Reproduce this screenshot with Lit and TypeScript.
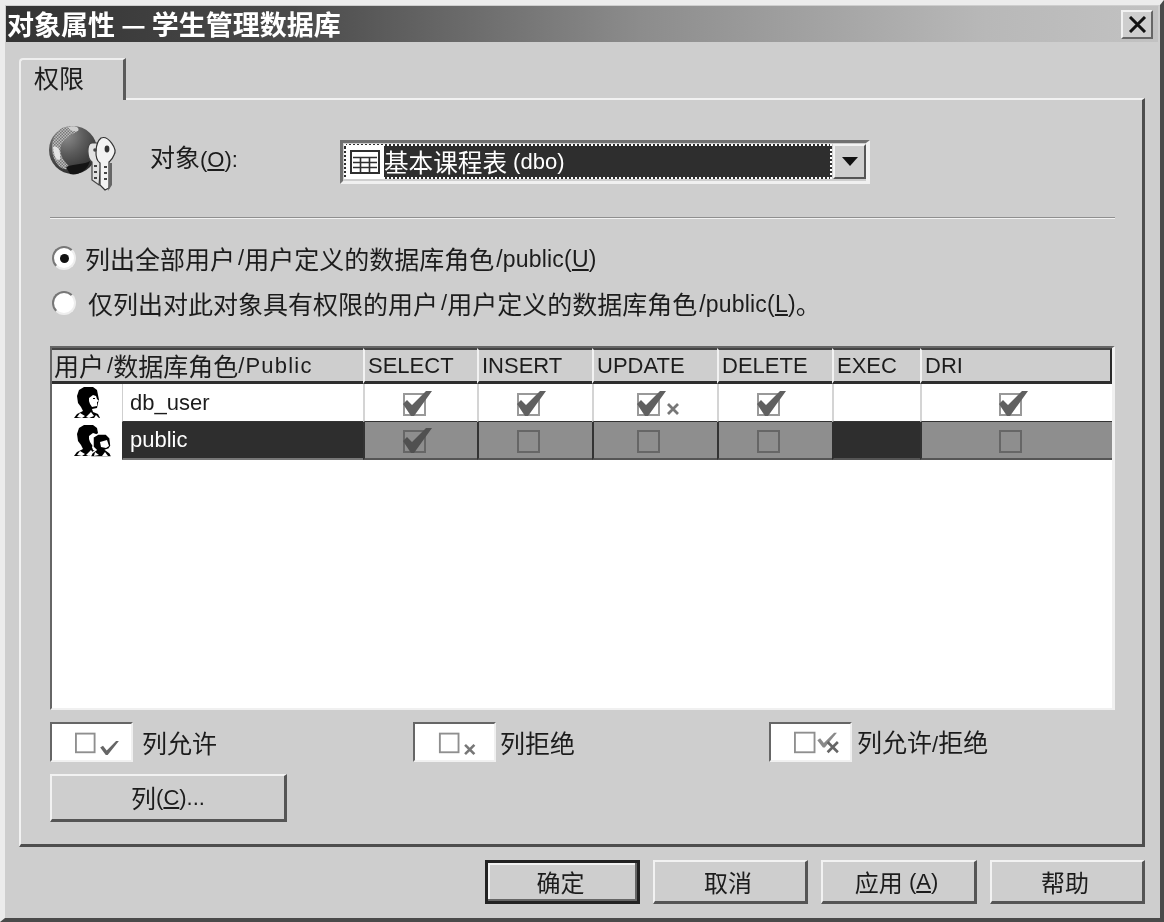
import { LitElement, html, css, svg } from "lit";
import { customElement } from "lit/decorators.js";

type Cell = "allow" | "allowx" | "empty" | "none";
const cols = ["SELECT", "INSERT", "UPDATE", "DELETE", "EXEC", "DRI"];
const rows: { name: string; icon: string; sel: boolean; cells: Cell[] }[] = [
  { name: "db_user", icon: "user", sel: false, cells: ["allow", "allow", "allowx", "allow", "none", "allow"] },
  { name: "public", icon: "group", sel: true, cells: ["allow", "empty", "empty", "empty", "none", "empty"] },
];

const box = (x: number, y: number, s: number, c: string) =>
  svg`<rect x=${x + 1} y=${y + 1} width=${s - 2} height=${s - 2} fill="none" stroke=${c} stroke-width="2"/>`;
const bigCheck = (x: number, y: number, c: string) =>
  svg`<path d="M${x} ${y + 13} L${x + 4} ${y + 9} L${x + 9} ${y + 14} L${x + 23} ${y} L${x + 29} ${y} L${x + 11} ${y + 25} L${x + 8} ${y + 25} Z" fill=${c}/>`;
const cross = (x: number, y: number, c: string, s = 11) =>
  svg`<path d="M${x} ${y} L${x + s} ${y + s} M${x + s} ${y} L${x} ${y + s}" stroke=${c} stroke-width="2.8" fill="none"/>`;

function cellIcon(kind: Cell, sel: boolean) {
  if (kind === "none") return null;
  const bc = sel ? "#666" : "#999";
  const w = kind === "allowx" ? 46 : 31;
  return html`<svg width=${w} height="28" viewBox="0 0 ${w} 28">
    ${box(2, 4, 23, bc)}
    ${kind !== "empty" ? bigCheck(2, 2, sel ? "#505050" : "#606060") : null}
    ${kind === "allowx" ? cross(33, 15, "#777", 10) : null}
  </svg>`;
}

const head = (dx: number) => svg`<g transform="translate(${dx} 0)">
  <path d="M5 3 L10 0 L19 0 L23 3 L24 8 L25 13 L24 16 L23 21 L18 22 L19 25 L24 27 L26 31 L0 31 L3 27 L9 24 L7 20 L4 16 L3 9 Z" fill="#000"/>
  <path d="M15 11 L19 8 L22 9 L23 12 L25 14 L23 15 L23 19 L18 20 L16 17 L15 14 Z" fill="#fff"/>
  <path d="M19 11 H21 V12 H19 Z" fill="#000"/>
  <path d="M6 26 L11 29 L8 31 L3 30 Z M17 25 L20 29 L15 31 L12 30 Z M22 28 L25 31 L20 31 Z" fill="#fff"/>
</g>`;

const userIcon = html`<svg width="28" height="32" viewBox="0 0 28 32">${head(1)}</svg>`;
const groupIcon = html`<svg class="grp" width="40" height="32" viewBox="0 0 40 32">
  ${head(0)}
  <g transform="translate(16 9)"><path d="M3 3 L8 0 L16 0 L20 4 L21 12 L19 15 L16 16 L20 19 L22 23 L0 23 L2 19 L6 16 L3 13 Z" fill="#000" stroke="#fff" stroke-width="1.5"/>
  <path d="M10 8 L17 6 L19 12 L16 14 L11 13 Z" fill="#fff"/>
  <path d="M5 18 L9 21 L4 22 Z M15 18 L18 22 L12 22 Z" fill="#fff"/></g>
</svg>`;

const keyIcon = html`<svg class="key" width="70" height="70" viewBox="0 0 70 70">
  <defs>
    <radialGradient id="g" cx="0.35" cy="0.2" r="0.95">
      <stop offset="0" stop-color="#8c8c8c"/><stop offset="0.4" stop-color="#5c5c5c"/>
      <stop offset="0.75" stop-color="#3a3a3a"/><stop offset="1" stop-color="#1c1c1c"/>
    </radialGradient>
    <pattern id="d" width="3" height="3" patternUnits="userSpaceOnUse">
      <rect width="3" height="3" fill="#bdbdbd"/><rect width="1.5" height="1.5" fill="#777"/><rect x="1.5" y="1.5" width="1.5" height="1.5" fill="#777"/>
    </pattern>
  </defs>
  <circle cx="25" cy="27" r="24" fill="url(#g)"/>
  <path d="M14 5 C24 2 32 4 29 9 C22 12 18 14 14 20 C10 28 14 36 20 42 C22 46 18 48 12 44 C3 36 -1 16 14 5Z" fill="url(#d)"/>
  <path d="M20 4 C28 2 32 5 30 8 C26 9 22 8 20 4Z" fill="#cfcfcf"/>
  <path d="M5 24 C10 22 13 28 12 36 C9 39 6 34 5 24Z" fill="#e4e4e4"/>
  <path d="M18 44 C28 40 36 42 42 38 C40 47 30 53 22 51 Z" fill="#141414"/>
  <path d="M44 20 C38 20 39 36 44 39 L44 57 L51 62 L53 40 L52 20Z" fill="#e2e2e2" stroke="#444" stroke-width="1.2"/>
  <path d="M53 15 C60 12 70 26 66 32 C64 37 62 38 61 39 L61 65 L57 67 L52 62 L52 40 C46 36 47 20 53 15Z" fill="#f2f2f2" stroke="#333" stroke-width="1.2"/>
  <ellipse cx="59" cy="26" rx="2.4" ry="3.4" fill="#333"/>
  <circle cx="47" cy="27" r="1.8" fill="#444"/>
  <path d="M56 44 H59 M56 50 H59 M56 56 H59 M46 43 H49 M46 49 H49 M46 55 H49" stroke="#444" stroke-width="2"/>
  <path d="M62 40 L64 40 L64 62 L60 68 L61 62 Z" fill="#666"/>
</svg>`;

const tableGlyph = html`<svg width="30" height="24" viewBox="0 0 30 24">
  <rect x="1" y="1" width="28" height="22" fill="#fff" stroke="#2e2e2e" stroke-width="2"/>
  <path d="M3 7.5 H27 M3 12.5 H27 M3 17.5 H27 M10.5 7 V22 M19.5 7 V22" stroke="#2e2e2e" stroke-width="1.6"/>
</svg>`;

const legendAllow = html`<svg width="60" height="28" viewBox="0 0 60 28">
  ${box(0, 4, 22, "#8f8f8f")}
  <path d="M27 20 L30 18 L34 23 L44 13 L47 13 L35 28 L33 28 Z" fill="#666"/>
</svg>`;
const legendDeny = html`<svg width="60" height="28" viewBox="0 0 60 28">
  ${box(1, 4, 22, "#8f8f8f")}${cross(29, 17, "#777", 10)}
</svg>`;
const legendBoth = html`<svg width="60" height="28" viewBox="0 0 60 28">
  ${box(0, 3, 23, "#8f8f8f")}
  <path d="M25 12 L28 10 L32 15 L43 4 L46 4 L33 20 L31 20 Z" fill="#8a8a8a"/>
  ${cross(36, 14, "#666", 11)}
</svg>`;

@customElement("app-root")
export class AppRoot extends LitElement {
  static styles = css`
    :host { display: block; width: 1164px; height: 922px; }
    * { box-sizing: border-box; }
    .win {
      width: 1164px; height: 922px; background: #cecece;
      border: 4px solid; border-color: #ececec #4a4a4a #4a4a4a #ececec;
      border-left-width: 5px; border-top-width: 5px;
      display: flex; flex-direction: column;
      font-family: "Liberation Sans", "Noto Sans CJK SC", sans-serif;
      font-size: 22px; color: #1c1c1c; line-height: 1;
      filter: blur(0.5px);
    }
    .c { font-family: "Noto Sans CJK SC", sans-serif; font-size: 25px; }
    .s { margin-left: 3px; }
    .w { font-size: 23px; letter-spacing: 0.2px; margin-left: 2px; padding-top: 2px; }
    .wh { letter-spacing: 1.2px; }
    u { text-underline-offset: 2px; }
    .title {
      margin: 1px 2px 0 1px; height: 36px; flex: none;
      display: flex; align-items: center; justify-content: space-between;
      padding: 0 5px 0 1px;
      background: linear-gradient(90deg, #333 0%, #4a4a4a 25%, #8c8c8c 55%, #b8b8b8 85%, #c2c2c2 100%);
      color: #fff; font-family: "Noto Sans CJK SC", sans-serif; font-weight: 700; font-size: 27px;
    }
    .title > span { padding-bottom: 2px; }
    .close {
      width: 32px; height: 29px; background: #cecece;
      border: 2px solid; border-color: #f2f2f2 #666 #666 #f2f2f2;
      display: flex; align-items: center; justify-content: center;
    }
    .body { flex: 1; display: flex; flex-direction: column; padding: 16px 15px 0 14px; min-height: 0; }
    .tab {
      position: relative; z-index: 1; width: 107px; height: 42px; margin-bottom: -2px; flex: none;
      background: #cecece; border-top: 2px solid #efefef; border-left: 2px solid #efefef;
      border-right: 3px solid #5a5a5a; border-top-left-radius: 4px;
      padding: 5px 0 0 13px;
    }
    .panel {
      height: 749px; flex: none;
      border: 2px solid; border-color: #f2f2f2 #4e4e4e #4e4e4e #f2f2f2;
      border-right-width: 3px; border-bottom-width: 3px;
      padding: 23px 27px 0 29px;
      display: flex; flex-direction: column;
    }
    .obj { display: grid; grid-template-columns: 104px 190px 530px; align-items: center; height: 70px; margin-left: -4px; }
    .key { margin-left: 2px; display: block; }
    .obj-label { padding-bottom: 2px; }
    .combo {
      height: 44px; width: 530px; display: flex; margin-top: 8px;
      border: 3px solid; border-color: #707070 #f0f0f0 #f0f0f0 #707070; border-right-width: 4px;
      background: #cecece; padding: 1px 0 2px 1px;
    }
    .combo-val {
      flex: 1; background: #2e2e2e; color: #fff; display: flex; align-items: center;
      outline: 2px dotted #fff; outline-offset: -2px; padding-left: 2px;
    }
    .combo-val .c { font-size: 24.6px; }
    .glyph { width: 38px; height: 34px; background: #fff; display: flex; align-items: center; justify-content: center; flex: none; }
    .combo-btn {
      width: 33px; flex: none; background: #cecece; margin-left: 1px;
      border: 2px solid; border-color: #f2f2f2 #555 #555 #f2f2f2;
      display: flex; align-items: center; justify-content: center;
    }
    .sep { margin-top: 24px; height: 2px; background: #8f8f8f; border-bottom: 1px solid #f2f2f2; flex: none; }
    .opt { display: flex; align-items: center; height: 24px; flex: none; white-space: nowrap; }
    .opt1 { margin-top: 27px; }
    .opt2 { margin-top: 21px; }
    .radio {
      width: 24px; height: 24px; border-radius: 50%; margin: 0 9px 0 2px; flex: none;
      background: #fff; border: 2px solid; border-color: #777 #eee #eee #777;
      display: flex; align-items: center; justify-content: center;
    }
    .opt2 .radio { margin-right: 12px; }
    .dot { width: 9px; height: 9px; border-radius: 50%; background: #111; }
    .table {
      margin-top: 31px; height: 364px; flex: none; background: #fff;
      border: 2px solid; border-color: #666 #f0f0f0 #f0f0f0 #666;
      border-right-width: 3px;
    }
    .grid { display: grid; grid-template-columns: 70px 241px 114px 115px 125px 115px 88px 192px; width: 1060px; }
    .hcell {
      height: 36px; background: #cecece; display: flex; align-items: center; padding-left: 3px;
      border-top: 2px solid #444; border-bottom: 3px solid #2e2e2e; border-left: 2px solid #f2f2f2;
      white-space: nowrap;
    }
    .hcell.span { grid-column: span 2; border-left: 0; padding-left: 2px; }
    .hcell.last { border-right: 2px solid #2a2a2a; }
    .icon { height: 38px; display: flex; align-items: center; justify-content: center; background: #fff; }
    .grp { margin-left: 14px; }
    .name { height: 38px; display: flex; align-items: center; padding-left: 7px; border-left: 1px solid #cfcfcf; border-bottom: 1px solid #333; background: #fff; }
    .cell { height: 38px; display: flex; align-items: center; justify-content: center; padding-right: 10px; border-left: 2px solid #d4d4d4; border-bottom: 1px solid #333; background: #fff; }
    .cell.allowx { padding: 0 0 0 5px; }
    .sel.name { background: #2e2e2e; color: #fff; border-left-color: #2e2e2e; border-bottom: 2px solid #777; }
    .sel.cell { background: #8e8e8e; border-left-color: #333; border-bottom: 2px solid #555; }
    .sel.cell.none { background: #2e2e2e; border-left-color: #2e2e2e; }
    .legend { display: grid; grid-template-columns: 363px 356px 1fr; margin-top: 12px; flex: none; }
    .lg { display: flex; align-items: center; gap: 9px; }
    .lg:nth-child(2) { gap: 4px; }
    .lg:nth-child(3) { gap: 5px; }
    .lgbox {
      width: 83px; height: 40px; background: #fff; flex: none;
      border: 2px solid; border-color: #666 #f0f0f0 #f0f0f0 #666;
      padding-left: 23px; display: flex; align-items: center;
    }
    .btn {
      background: #cecece; display: flex; align-items: center; justify-content: center; flex: none;
      border: 2px solid; border-color: #f2f2f2 #555 #555 #f2f2f2;
      border-right-width: 3px; border-bottom-width: 3px;
    }
    .cols { width: 237px; height: 48px; margin-top: 12px; }
    .foot { display: flex; justify-content: flex-end; gap: 13px; padding-top: 13px; }
    .foot .btn { width: 155px; height: 44px; padding-right: 4px; }
    .foot .c { font-size: 24px; }
    .foot .btn:nth-child(3) { width: 156px; }
    .foot .def { border: 3px solid #222; box-shadow: inset -2px -2px 0 #666, inset 2px 2px 0 #f2f2f2; }
  `;

  render() {
    return html`<div class="win">
      <div class="title">
        <span>对象属性 — 学生管理数据库</span>
        <div class="close"><svg width="19" height="17" viewBox="0 0 19 17"><path d="M2 1 L17 16 M17 1 L2 16" stroke="#111" stroke-width="3"/></svg></div>
      </div>
      <div class="body">
        <div class="tab"><span class="c">权限</span></div>
        <div class="panel">
          <div class="obj">
            <div>${keyIcon}</div>
            <div class="obj-label"><span class="c">对象</span>(<u>O</u>):</div>
            <div class="combo">
              <div class="combo-val"><div class="glyph">${tableGlyph}</div><span class="c">基本课程表</span>&nbsp;(dbo)</div>
              <div class="combo-btn"><svg width="16" height="9" viewBox="0 0 16 9"><path d="M0 0 H16 L8 9 Z" fill="#111"/></svg></div>
            </div>
          </div>
          <div class="sep"></div>
          <div class="opt opt1"><div class="radio"><div class="dot"></div></div><span class="c">列出全部用户</span><span class="s">/</span><span class="c">用户定义的数据库角色</span><span class="w">/public(<u>U</u>)</span></div>
          <div class="opt opt2"><div class="radio"></div><span class="c">仅列出对此对象具有权限的用户</span><span class="s">/</span><span class="c">用户定义的数据库角色</span><span class="w">/public(<u>L</u>)</span><span class="c">。</span></div>
          <div class="table">
            <div class="grid">
              <div class="hcell span"><span class="c">用户</span><span class="s">/</span><span class="c">数据库角色</span><span class="wh">/Public</span></div>
              ${cols.map((c, i) => html`<div class="hcell ${i === cols.length - 1 ? "last" : ""}">${c}</div>`)}
              ${rows.map((r) => html`
                <div class="icon">${r.icon === "user" ? userIcon : groupIcon}</div>
                <div class="name ${r.sel ? "sel" : ""}">${r.name}</div>
                ${r.cells.map((k) => html`<div class="cell ${r.sel ? "sel" : ""} ${k}">${cellIcon(k, r.sel)}</div>`)}
              `)}
            </div>
          </div>
          <div class="legend">
            <div class="lg"><div class="lgbox">${legendAllow}</div><span class="c">列允许</span></div>
            <div class="lg"><div class="lgbox">${legendDeny}</div><span class="c">列拒绝</span></div>
            <div class="lg"><div class="lgbox">${legendBoth}</div><span><span class="c">列允许</span>/<span class="c">拒绝</span></span></div>
          </div>
          <div class="btn cols"><span class="c">列</span>(<u>C</u>)...</div>
        </div>
        <div class="foot">
          <div class="btn def"><span class="c">确定</span></div>
          <div class="btn"><span class="c">取消</span></div>
          <div class="btn"><span class="c">应用</span>&nbsp;(<u>A</u>)</div>
          <div class="btn"><span class="c">帮助</span></div>
        </div>
      </div>
    </div>`;
  }
}
